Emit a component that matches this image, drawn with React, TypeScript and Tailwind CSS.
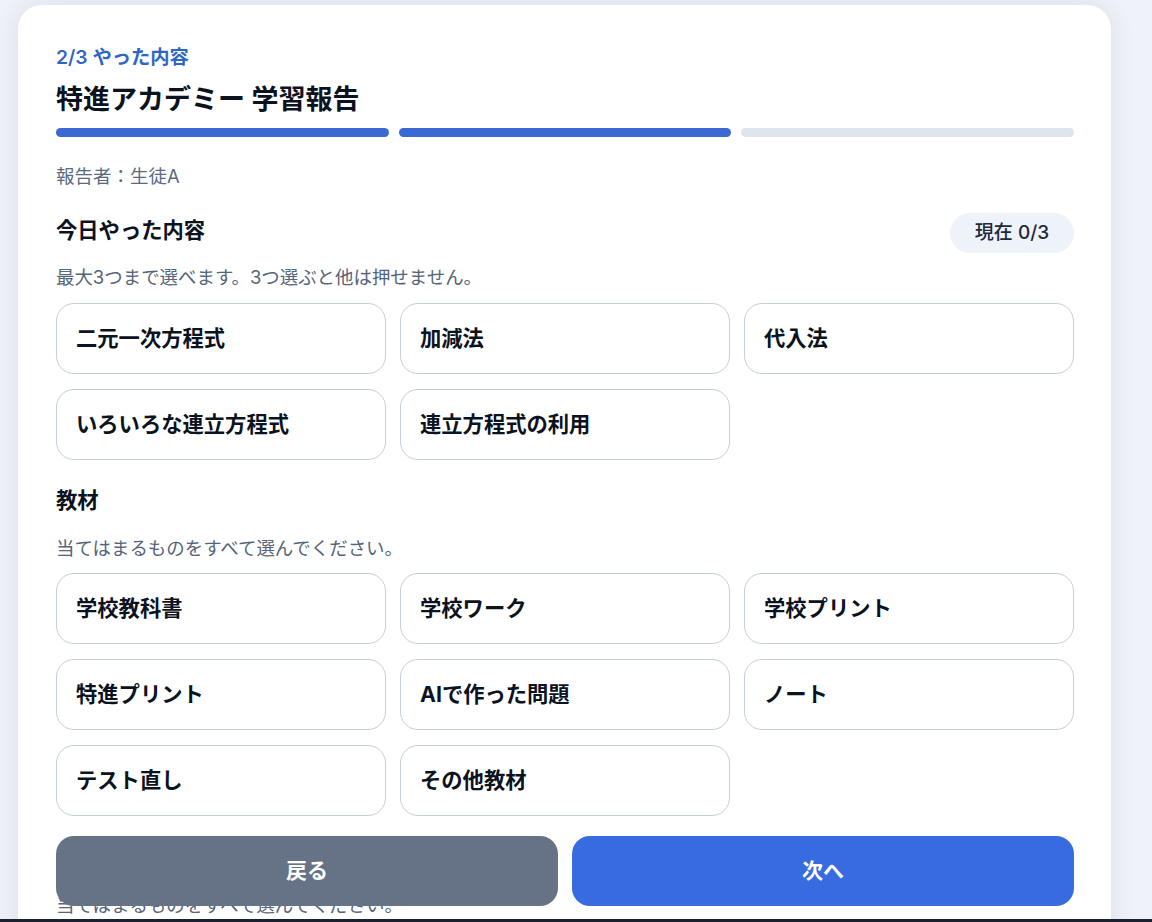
const topics = ['二元一次方程式', '加減法', '代入法', 'いろいろな連立方程式', '連立方程式の利用']
const materials = ['学校教科書', '学校ワーク', '学校プリント', '特進プリント', 'AIで作った問題', 'ノート', 'テスト直し', 'その他教材']

function ChoiceGrid({ items }: { items: string[] }) {
  return (
    <div className="grid grid-cols-3 gap-x-[14px] gap-y-[15px]">
      {items.map((item) => (
        <button
          key={item}
          className="flex h-[71px] items-center rounded-[18px] border border-[#c5ced9] bg-white px-[19px] text-left text-[21.3px] font-bold text-[#0b1220]"
        >
          {item}
        </button>
      ))}
    </div>
  )
}

function Hint({ text }: { text: string }) {
  return <p className="text-[18.45px] leading-[26px] text-[#55647a]">{text}</p>
}

export default function App() {
  return (
    <div className="relative flex h-[922px] flex-col overflow-hidden bg-[#eff2f8] font-['Inter','Noto_Sans_CJK_JP',sans-serif]">
      <div className="min-h-0 flex-1 overflow-hidden pt-[5px] pr-[41px] pl-[18px]">
        <div className="rounded-t-[24px] bg-white pt-[38px] pr-[37px] pb-[120px] pl-[38px] shadow-[0_0_26px_rgba(30,50,90,0.1)]">
          <p className="text-[19.3px] leading-[28px] font-semibold text-[#2f66c4]">2/3 やった内容</p>
          <h1 className="mt-[11px] text-[27px] leading-[36px] font-bold text-[#0b1220]">特進アカデミー 学習報告</h1>

          <div className="mt-[10px] flex gap-[10px]">
            <div className="h-[9px] flex-1 rounded-full bg-[#3b69d3]" />
            <div className="h-[9px] flex-1 rounded-full bg-[#3b69d3]" />
            <div className="h-[9px] flex-1 rounded-full bg-[#dfe5ee]" />
          </div>

          <p className="mt-[25px] text-[18.5px] leading-[28px] text-[#5b6a80]">報告者：生徒A</p>

          <div className="mt-[23px] flex items-start justify-between">
            <h2 className="mt-[2px] text-[21.3px] leading-[30px] font-bold text-[#0b1220]">今日やった内容</h2>
            <span className="flex h-[40px] w-[124px] items-center justify-center rounded-full bg-[#eef2f9] text-[19px] font-medium text-[#1e293b]">
              現在 0/3
            </span>
          </div>

          <div className="mt-[11px] mb-[13px]">
            <Hint text="最大3つまで選べます。3つ選ぶと他は押せません。" />
          </div>
          <ChoiceGrid items={topics} />

          <h2 className="mt-[25px] text-[21.3px] leading-[30px] font-bold text-[#0b1220]">教材</h2>
          <div className="mt-[20px] mb-[12px]">
            <Hint text="当てはまるものをすべて選んでください。" />
          </div>
          <ChoiceGrid items={materials} />

          <div className="mt-[76px]">
            <Hint text="当てはまるものをすべて選んでください。" />
          </div>
        </div>
      </div>
      <div className="h-[3px] bg-[#1a2030]" />

      <div className="absolute top-[836px] left-[56px] flex h-[70px] w-[1018px] gap-[14px]">
        <button className="flex-1 rounded-[18px] bg-[#667387] text-[21px] font-bold text-white">戻る</button>
        <button className="flex-1 rounded-[18px] bg-[#386bdf] text-[21px] font-bold text-white">次へ</button>
      </div>
    </div>
  )
}
